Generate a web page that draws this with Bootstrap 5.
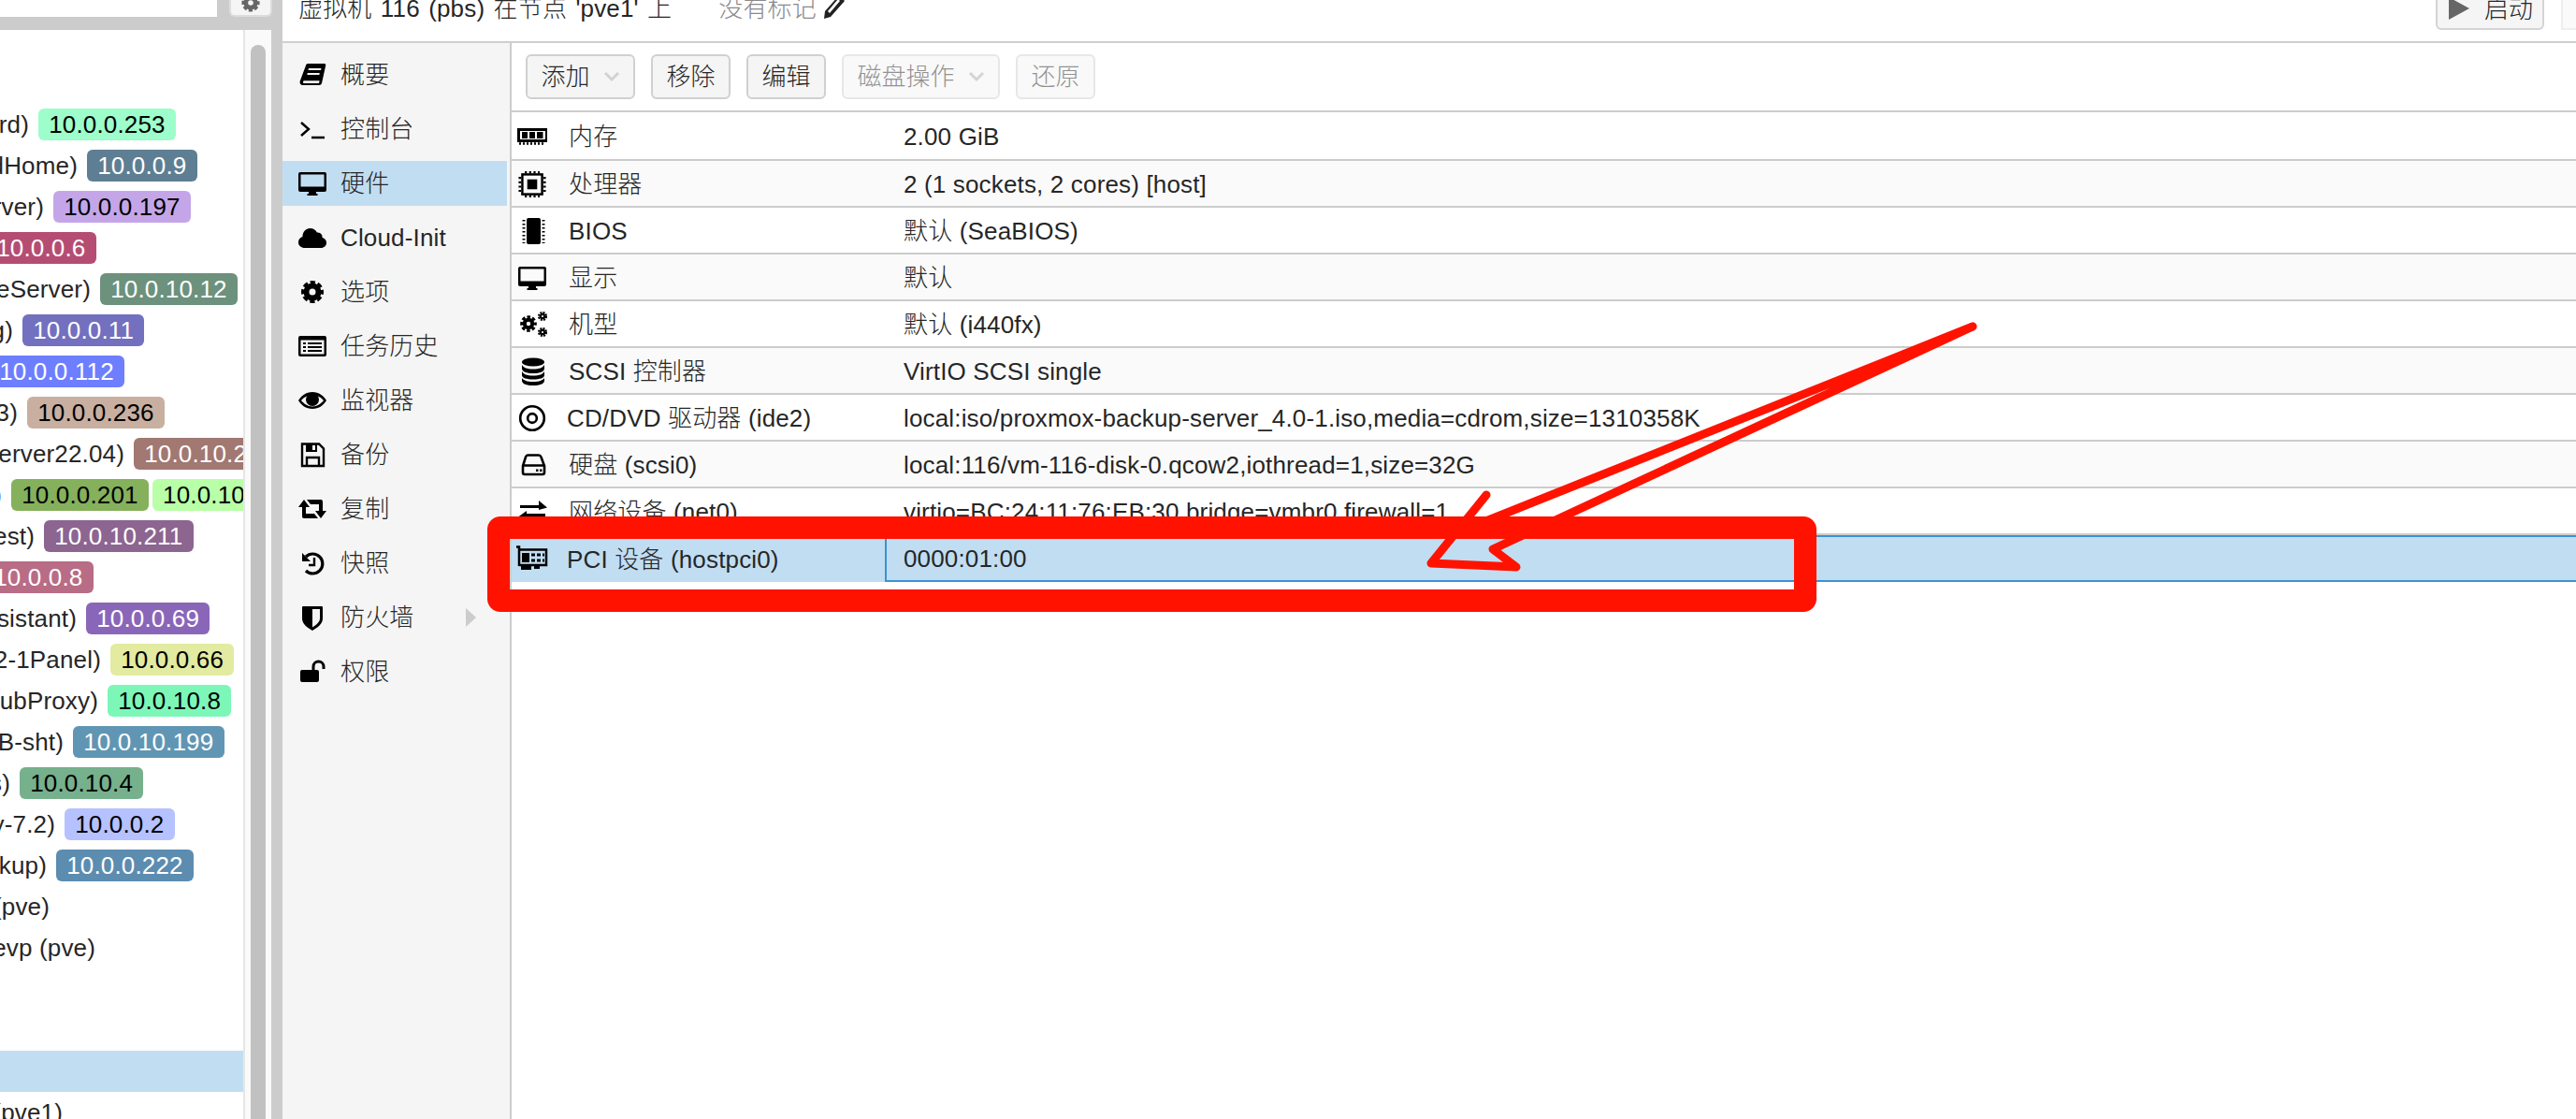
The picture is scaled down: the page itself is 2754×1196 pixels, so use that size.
<!DOCTYPE html>
<html lang="zh-CN">
<head>
<meta charset="utf-8">
<title>虚拟机 116 (pbs)</title>
<link href="https://cdn.jsdelivr.net/npm/bootstrap@5.3.0/dist/css/bootstrap.min.css" rel="stylesheet">
<style>
html,body{height:1196px;overflow:hidden}
body{font-family:"Liberation Sans","Noto Sans CJK SC",sans-serif;font-size:26px;line-height:32px;letter-spacing:.16px;color:#262626;background:#ccc;font-weight:300}
.page-wrap{height:1196px;position:relative}
.left-col{width:302px;flex:none;background:#ccc}
.search-strip{height:32px;padding-right:11px}
.search-box{width:232px;height:18px;background:#fff}
.gear-btn{width:46px;height:18px;margin-left:13px;background:#f5f5f5;border-radius:0 0 6px 6px;border:2px solid #ddd;border-top:0;color:#666}
.tree-area{height:1164px;width:290px;background:#fafafa}
.tree-list{width:260px;background:#fff;height:100%;overflow:hidden;padding-top:79px;border-right:0}
.tree-gap{width:2px;background:#e6e6e6}
.scroll-track{width:28px;padding:16px 6px 0}
.scroll-thumb{height:100%;background:#c1c1c1;border-radius:8px 8px 0 0}
.tree-row{height:44px;display:flex;align-items:center;white-space:nowrap;overflow:hidden;width:260px}
.tree-row.picked{background:#c1ddf2}
.node-txt{display:flex;justify-content:flex-end;flex:none;margin-right:10px}
.ip-tag{flex:none;height:34px;line-height:34px;padding:0 11.2px;border-radius:6px;margin-right:4px}
.main-col{min-width:0;background:#fff}
.head-bar{height:46px;border-bottom:2px solid #cfcfcf;padding-left:17px;overflow:hidden;align-items:flex-start}
.head-title{margin-top:-7px;word-spacing:2px}
.head-tags{color:#8a8a8a;margin:-7px 0 0 50px}
.head-tags svg{margin-left:7px;width:24px;height:26px;vertical-align:-2px;color:#222}
.start-btn{width:116px;height:33px;margin:-1px 18px 0 auto;padding:0 0 0 12px;text-align:left;border:2px solid #d4d4d4;border-top:0;border-radius:0 0 6px 6px;background:#f5f5f5;display:flex;align-items:flex-end;gap:16px}
.start-btn span{line-height:34px;margin-top:-12px;position:relative;top:-3px;font-size:26px;color:#262626;font-weight:300}
.start-btn svg{margin-bottom:9px}
.next-btn{width:40px;height:33px;margin-top:-1px;border:2px solid #eee;border-top:0;border-radius:0 0 6px 0;margin-right:-24px;background:#fafafa;flex:none}
.side-menu{width:245px;background:#f5f5f5;border-right:2px solid #ccc;padding:10px 3px 0 0;flex:none;height:1150px}
.side-item{height:48px;margin-bottom:10px;padding:0 0 0 17px;display:flex;align-items:center;position:relative}
.side-item.active-item{background:#c1ddf2}
.side-item svg{width:30px;height:30px;margin-right:15px;flex:none;color:#000}
.more-arrow{position:absolute;left:196px;top:14px;width:0;height:0;border-left:11px solid #ccc;border-top:10px solid transparent;border-bottom:10px solid transparent}
.tool-row{height:74px;border-bottom:2px solid #ccc;padding:12px 0 0 15px;gap:17px}
.pve-btn{height:48px;border:2px solid #d0d0d0;border-radius:6px;background:#f5f5f5;font-size:26px;line-height:32px;color:#262626;padding:0 14.5px;font-weight:300;display:flex;align-items:center;--bs-btn-disabled-opacity:.5}
.pve-btn:disabled{background:#f5f5f5;border-color:#d0d0d0;color:#262626}
.pve-btn svg{margin-left:14px}
.grid-row{height:50px;border-bottom:2px solid #ccc;display:flex;align-items:center;white-space:nowrap}
.grid-row.first-row{height:52px}
.grid-row.zebra{background:#fafafa}
.grid-row.sel-row{background:#c1ddf2;border-bottom:0}
.name-cell{width:399px;flex:none;display:flex;align-items:center;padding:2px 0 0 5px}
.name-cell svg{width:34px;height:30px;flex:none;margin-right:22px;color:#000}
.name-cell.tight svg{margin-right:20px}
.val-cell{padding:2px 0 0 20px;flex:1 1 auto;height:100%;display:flex;align-items:center}
.sel-row .val-cell{border:2px solid #3a92d2;border-right:0;padding:0 0 0 18px}
.note-frame{position:absolute;left:521px;top:552px;width:1421px;height:102px;border:24px solid #ff1300;border-radius:14px;pointer-events:none}
.note-arrow{position:absolute;left:0;top:0;width:2754px;height:1196px;pointer-events:none}
</style>
</head>
<body>
<svg class="d-none" xmlns="http://www.w3.org/2000/svg">
<symbol id="i-book" viewBox="0 0 30 30"><path fill="currentColor" fill-rule="evenodd" d="M10 3H28c1 0 1.5 1 1.2 2L25 24c-.4 1.3-1.5 2-2.8 2H5c-2.5 0-4-2-3.2-4.5L8 5c.3-1.2 1-2 2-2Z M11 8l-.5 2H24l.5-2Z M9.8 13l-.5 2h13l.5-2Z M5 23c0 .8.6 1 1.2 1H22l.6-2.7H6c-.6 0-1 .9-1 1.7Z"/></symbol>
<symbol id="i-term" viewBox="0 0 30 30"><path fill="none" stroke="currentColor" stroke-width="2.4" d="M3 8l8 7-8 7M14 24h14"/></symbol>
<symbol id="i-desk" viewBox="0 0 30 30"><path fill="currentColor" fill-rule="evenodd" d="M2 3H28a2 2 0 0 1 2 2V22a2 2 0 0 1-2 2H19v2h1.5v2H9.5v-2H11v-2H2a2 2 0 0 1-2-2V5a2 2 0 0 1 2-2Z M2.5 5.5V18.500H27.5V5.5Z"/></symbol>
<symbol id="i-cloud" viewBox="0 0 30 30"><path fill="currentColor" d="M7 26C3 26 0 23.5 0 20c0-3 1.8-5 4.500-6C4.300 9 8 5 12.500 5c3.500 0 6 2 7.500 4.500C24 9 26 12 25.500 15c2.800.7 4.500 2.600 4.500 5.500 0 3-2.500 5.500-6 5.500Z"/></symbol>
<symbol id="i-gear" viewBox="0 0 30 30"><circle cx="15" cy="15" r="6.500" fill="none" stroke="currentColor" stroke-width="6"/><circle cx="15" cy="15" r="9.800" fill="none" stroke="currentColor" stroke-width="4.400" stroke-dasharray="5 2.697" stroke-dashoffset="2.500"/></symbol>
<symbol id="i-list" viewBox="0 0 30 30"><path fill="currentColor" fill-rule="evenodd" d="M2 4H28a2 2 0 0 1 2 2V24a2 2 0 0 1-2 2H2a2 2 0 0 1-2-2V6a2 2 0 0 1 2-2Z M2.500 8.500V23.500H27.500V8.500Z"/><path fill="currentColor" d="M5 11h3v2H5Zm5 0h15v2H10ZM5 15h3v2H5Zm5 0h15v2H10ZM5 19h3v2H5Zm5 0h15v2H10Z"/></symbol>
<symbol id="i-eye" viewBox="0 0 30 30"><path fill="currentColor" fill-rule="evenodd" d="M15 6C8 6 3 10 0 15c3 5 8 9 15 9s12-4 15-9c-3-5-8-9-15-9Z M15 9C10 9 5.500 12 3 15c2.500 3 7 6.500 12 6.500s9.500-3.500 12-6.500c-2.500-3-7-6-12-6Z"/><circle cx="15" cy="14" r="7" fill="currentColor"/></symbol>
<symbol id="i-save" viewBox="0 0 30 30"><path fill="none" stroke="currentColor" stroke-width="2.400" d="M4 3.500H22L27 8.500V27H4Z M9 27V18H22V27"/><path fill="currentColor" d="M8 3h12v9H8Z"/><path fill="#f5f5f5" d="M15 5h3v5h-3Z"/></symbol>
<symbol id="i-rt" viewBox="0 0 30 30"><path fill="currentColor" d="M0 13L6 5l6 8H8v7h9l4 5H6a2 2 0 0 1-2-2V13Z M30 17l-6 8-6-8h4v-7h-9L9 5h15a2 2 0 0 1 2 2v10Z"/></symbol>
<symbol id="i-hist" viewBox="0 0 30 30"><path fill="none" stroke="currentColor" stroke-width="3.200" d="M8 8A10.500 10.500 0 1 1 8 23"/><path fill="currentColor" d="M4 4V13H13Z"/><path fill="none" stroke="currentColor" stroke-width="2.400" d="M17 9V17H11"/></symbol>
<symbol id="i-shield" viewBox="0 0 30 30"><path fill="currentColor" fill-rule="evenodd" d="M5 3H25a1 1 0 0 1 1 1V16c0 6-6 10-11 13C10 26 4 22 4 16V4a1 1 0 0 1 1-1Z M15 6H23V16c0 4-4 7-8 9.500Z"/></symbol>
<symbol id="i-lock" viewBox="0 0 30 30"><path fill="currentColor" d="M4 13H20a2 2 0 0 1 2 2V24a2 2 0 0 1-2 2H4a2 2 0 0 1-2-2V15a2 2 0 0 1 2-2Z"/><path fill="none" stroke="currentColor" stroke-width="3" d="M16 13V9.500a5.500 5.500 0 0 1 11 0V12"/></symbol>
<symbol id="i-mem" viewBox="0 0 34 30"><path fill="currentColor" fill-rule="evenodd" d="M1 6H33V21H1Z M4 9V18H31V9Z"/><path fill="currentColor" d="M6 10h6v7H6Zm8 0h6v7h-6Zm8 0h6.500v7H22Z"/><path fill="none" stroke="currentColor" stroke-width="2.500" stroke-dasharray="2 2" d="M3 22.500H31"/></symbol>
<symbol id="i-cpu" viewBox="0 0 34 34"><rect x="5" y="5" width="24" height="24" fill="none" stroke="currentColor" stroke-width="2.800"/><path fill="currentColor" d="M11 11h12v12H11Z"/><path fill="none" stroke="currentColor" stroke-width="3" stroke-dasharray="2.500 2.800" d="M8 2.500H26M8 31.500H26M2 8V26M32 8V26"/></symbol>
<symbol id="i-chip" viewBox="0 0 34 30"><path fill="currentColor" d="M13 1H24a2 2 0 0 1 2 2V27a2 2 0 0 1-2 2H13a2 2 0 0 1-2-2V3a2 2 0 0 1 2-2Z"/><path fill="none" stroke="currentColor" stroke-width="3" stroke-dasharray="1.500 2.500" d="M8 3V28M29 3V28"/></symbol>
<symbol id="i-cogs" viewBox="0 0 34 30"><circle cx="13" cy="14" r="4.200" fill="none" stroke="currentColor" stroke-width="4"/><circle cx="13" cy="14" r="7.200" fill="none" stroke="currentColor" stroke-width="3.200" stroke-dasharray="3.500 2.155" stroke-dashoffset="1.750"/><circle cx="28" cy="6" r="2.200" fill="none" stroke="currentColor" stroke-width="2.200"/><circle cx="28" cy="6" r="4" fill="none" stroke="currentColor" stroke-width="2.200" stroke-dasharray="2 1.140"/><circle cx="28" cy="23" r="2.200" fill="none" stroke="currentColor" stroke-width="2.200"/><circle cx="28" cy="23" r="4" fill="none" stroke="currentColor" stroke-width="2.200" stroke-dasharray="2 1.140"/></symbol>
<symbol id="i-db" viewBox="0 0 34 30"><ellipse cx="18" cy="5" rx="12" ry="4.500" fill="currentColor"/><path fill="currentColor" d="M6 8c2 3 5 4.500 12 4.500S28 11 30 8v4c0 3-5 5-12 5S6 15 6 12Zm0 7c2 3 5 4.500 12 4.500S28 18 30 15v4c0 3-5 4.500-12 4.500S6 22 6 19Zm0 7c2 2.500 5 4 12 4s10-1.500 12-4v3c0 3-5 5-12 5S6 28 6 25Z"/></symbol>
<symbol id="i-dot" viewBox="0 0 34 34"><circle cx="17" cy="17" r="14.500" fill="none" stroke="currentColor" stroke-width="3"/><circle cx="17" cy="17" r="5.500" fill="none" stroke="currentColor" stroke-width="3"/></symbol>
<symbol id="i-hdd" viewBox="0 0 34 30"><path fill="none" stroke="currentColor" stroke-width="2.600" d="M12 4.500H24c1.500 0 2 .8 2.500 2L30 16V23a2 2 0 0 1-2 2H9a2 2 0 0 1-2-2V16L10 6.500C10.500 5.300 11 4.500 12 4.500Z M7 15.500H30"/><path fill="currentColor" d="M21 19.500h2.500V22H21Zm4 0h2.500V22H25Z"/></symbol>
<symbol id="i-net" viewBox="0 0 34 30"><path fill="currentColor" d="M4 8H24V3L33 10.500 24 13V11H4ZM31 17H11V14L2 20.500 11 27V20H31Z"/></symbol>
<symbol id="i-pci" viewBox="0 0 34 30"><path fill="none" stroke="currentColor" stroke-width="2.500" d="M0 1.500H3V22M3 4.500H32V21H3"/><path fill="currentColor" d="M6 8h8v10H6Zm10 .5h4v3h-4Zm6 0h4v3h-4Zm6 0h2v3h-2Zm-12 6h4v3h-4Zm6 0h4v3h-4Zm6 0h2v3h-2ZM5 22h11v4H5Zm14 0h6v3h-6Z"/></symbol>
<symbol id="i-pen" viewBox="0 0 24 26"><path fill="currentColor" fill-rule="evenodd" d="M17 1L23 7 8 24 1 26 2 18Z M16 5L5 18 7 20 18 7Z"/></symbol>
</svg>

<div class="page-wrap d-flex">
  <aside class="left-col">
    <div class="search-strip d-flex">
      <div class="search-box"></div>
      <div class="gear-btn d-flex justify-content-center overflow-hidden">
        <svg width="24" height="24" style="margin-top:-9px"><use href="#i-gear"/></svg>
      </div>
    </div>
    <div class="tree-area d-flex">
      <div class="tree-list">
        <div class="tree-row"><span class="node-txt" style="width:31px">rd)</span><span class="ip-tag" style="background:#9dfdcb;color:#000">10.0.0.253</span></div>
        <div class="tree-row"><span class="node-txt" style="width:83px">dHome)</span><span class="ip-tag" style="background:#5e7e93;color:#fff">10.0.0.9</span></div>
        <div class="tree-row"><span class="node-txt" style="width:47px">rver)</span><span class="ip-tag" style="background:#c4a6e8;color:#000">10.0.0.197</span></div>
        <div class="tree-row"><span class="ip-tag" style="background:#b54d73;color:#fff;margin-left:-15px">10.0.0.6</span></div>
        <div class="tree-row"><span class="node-txt" style="width:97px">eServer)</span><span class="ip-tag" style="background:#6c917c;color:#fff">10.0.10.12</span></div>
        <div class="tree-row"><span class="node-txt" style="width:14px">g)</span><span class="ip-tag" style="background:#7270bf;color:#fff">10.0.0.11</span></div>
        <div class="tree-row"><span class="ip-tag" style="background:#6d7eff;color:#fff;margin-left:-12px">10.0.0.112</span></div>
        <div class="tree-row"><span class="node-txt" style="width:19px">3)</span><span class="ip-tag" style="background:#c9afa0;color:#000">10.0.0.236</span></div>
        <div class="tree-row"><span class="node-txt" style="width:133px">erver22.04)</span><span class="ip-tag" style="background:#a17872;color:#fff">10.0.10.21</span></div>
        <div class="tree-row"><span class="node-txt" style="width:2px">)</span><span class="ip-tag" style="background:#85b05c;color:#000">10.0.0.201</span><span class="ip-tag" style="background:#b8ffa8;color:#000">10.0.10.10</span></div>
        <div class="tree-row"><span class="node-txt" style="width:37px">est)</span><span class="ip-tag" style="background:#8c6590;color:#fff">10.0.10.211</span></div>
        <div class="tree-row"><span class="ip-tag" style="background:#b86c85;color:#fff;margin-left:-18px">10.0.0.8</span></div>
        <div class="tree-row"><span class="node-txt" style="width:82px">sistant)</span><span class="ip-tag" style="background:#8a66b8;color:#fff">10.0.0.69</span></div>
        <div class="tree-row"><span class="node-txt" style="width:108px">2-1Panel)</span><span class="ip-tag" style="background:#e2eba0;color:#000">10.0.0.66</span></div>
        <div class="tree-row"><span class="node-txt" style="width:105px">ubProxy)</span><span class="ip-tag" style="background:#7cf7b8;color:#000">10.0.10.8</span></div>
        <div class="tree-row"><span class="node-txt" style="width:68px">B-sht)</span><span class="ip-tag" style="background:#6096b4;color:#fff">10.0.10.199</span></div>
        <div class="tree-row"><span class="node-txt" style="width:11px">s)</span><span class="ip-tag" style="background:#76b08c;color:#000">10.0.10.4</span></div>
        <div class="tree-row"><span class="node-txt" style="width:59px">y-7.2)</span><span class="ip-tag" style="background:#b6c2ff;color:#000">10.0.0.2</span></div>
        <div class="tree-row"><span class="node-txt" style="width:50px">kup)</span><span class="ip-tag" style="background:#5c8cb0;color:#fff">10.0.0.222</span></div>
        <div class="tree-row"><span class="node-txt" style="width:53px">(pve)</span></div>
        <div class="tree-row"><span class="node-txt" style="width:102px">evp (pve)</span></div>
        <div class="tree-row"></div>
        <div class="tree-row"></div>
        <div class="tree-row picked"></div>
        <div class="tree-row"><span class="node-txt" style="width:67px">(pve1)</span></div>
      </div>
      <div class="tree-gap"></div>
      <div class="scroll-track"><div class="scroll-thumb"></div></div>
    </div>
  </aside>

  <main class="main-col flex-grow-1">
    <header class="head-bar d-flex">
      <div class="head-title">虚拟机 116 (pbs) 在节点 'pve1' 上</div>
      <div class="head-tags">没有标记<svg><use href="#i-pen"/></svg></div>
      <button class="btn start-btn" type="button"><svg width="22" height="24" viewBox="0 0 22 24"><path fill="#666" d="M0 0L22 12 0 24Z"/></svg><span>启动</span></button>
      <div class="next-btn"></div>
    </header>
    <div class="d-flex">
      <nav class="side-menu">
        <div class="side-item"><svg><use href="#i-book"/></svg>概要</div>
        <div class="side-item"><svg><use href="#i-term"/></svg>控制台</div>
        <div class="side-item active-item"><svg><use href="#i-desk"/></svg>硬件</div>
        <div class="side-item"><svg><use href="#i-cloud"/></svg>Cloud-Init</div>
        <div class="side-item"><svg><use href="#i-gear"/></svg>选项</div>
        <div class="side-item"><svg><use href="#i-list"/></svg>任务历史</div>
        <div class="side-item"><svg><use href="#i-eye"/></svg>监视器</div>
        <div class="side-item"><svg><use href="#i-save"/></svg>备份</div>
        <div class="side-item"><svg><use href="#i-rt"/></svg>复制</div>
        <div class="side-item"><svg><use href="#i-hist"/></svg>快照</div>
        <div class="side-item"><svg><use href="#i-shield"/></svg>防火墙<span class="more-arrow"></span></div>
        <div class="side-item"><svg><use href="#i-lock"/></svg>权限</div>
      </nav>
      <section class="flex-grow-1">
        <div class="tool-row d-flex">
          <button class="btn pve-btn" type="button">添加<svg width="18" height="12" viewBox="0 0 18 12"><path fill="none" stroke="#d2d2d2" stroke-width="3" d="M2 2l7 7 7-7"/></svg></button>
          <button class="btn pve-btn" type="button">移除</button>
          <button class="btn pve-btn" type="button">编辑</button>
          <button class="btn pve-btn" type="button" disabled>磁盘操作<svg width="18" height="12" viewBox="0 0 18 12"><path fill="none" stroke="#aaa" stroke-width="3" d="M2 2l7 7 7-7"/></svg></button>
          <button class="btn pve-btn" type="button" disabled>还原</button>
        </div>
        <div class="grid-row first-row"><div class="name-cell"><svg><use href="#i-mem"/></svg>内存</div><div class="val-cell">2.00 GiB</div></div>
        <div class="grid-row zebra"><div class="name-cell"><svg><use href="#i-cpu"/></svg>处理器</div><div class="val-cell">2 (1 sockets, 2 cores) [host]</div></div>
        <div class="grid-row"><div class="name-cell"><svg><use href="#i-chip"/></svg>BIOS</div><div class="val-cell">默认 (SeaBIOS)</div></div>
        <div class="grid-row zebra"><div class="name-cell"><svg><use href="#i-desk"/></svg>显示</div><div class="val-cell">默认</div></div>
        <div class="grid-row"><div class="name-cell"><svg><use href="#i-cogs"/></svg>机型</div><div class="val-cell">默认 (i440fx)</div></div>
        <div class="grid-row zebra"><div class="name-cell"><svg><use href="#i-db"/></svg>SCSI 控制器</div><div class="val-cell">VirtIO SCSI single</div></div>
        <div class="grid-row"><div class="name-cell tight"><svg><use href="#i-dot"/></svg>CD/DVD 驱动器 (ide2)</div><div class="val-cell">local:iso/proxmox-backup-server_4.0-1.iso,media=cdrom,size=1310358K</div></div>
        <div class="grid-row zebra"><div class="name-cell"><svg><use href="#i-hdd"/></svg>硬盘 (scsi0)</div><div class="val-cell">local:116/vm-116-disk-0.qcow2,iothread=1,size=32G</div></div>
        <div class="grid-row"><div class="name-cell"><svg><use href="#i-net"/></svg>网络设备 (net0)</div><div class="val-cell">virtio=BC:24:11:76:EB:30,bridge=vmbr0,firewall=1</div></div>
        <div class="grid-row sel-row"><div class="name-cell tight"><svg><use href="#i-pci"/></svg>PCI 设备 (hostpci0)</div><div class="val-cell">0000:01:00</div></div>
      </section>
    </div>
  </main>

  <div class="note-frame"></div>
  <svg class="note-arrow" viewBox="0 0 2754 1196" xmlns="http://www.w3.org/2000/svg">
    <path fill="none" stroke="#ff1300" stroke-width="9" stroke-linejoin="round" stroke-linecap="round" d="M2109 349L1576 562M1589 529L1530 602 1621 606 1596 587 2109 349"/>
  </svg>
</div>
</body>
</html>
